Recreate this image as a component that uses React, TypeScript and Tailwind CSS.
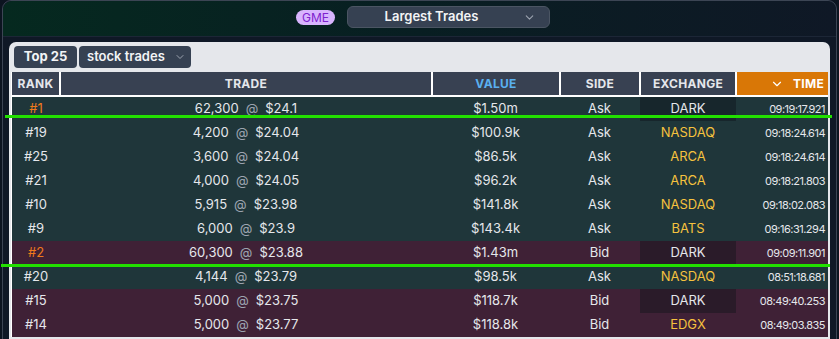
import { ChevronDown } from 'lucide-react'

type Trade = {
  rank: number
  size: string
  price: string
  value: string
  side: 'Ask' | 'Bid'
  exchange: string
  time: string
}

const TRADES: Trade[] = [
  { rank: 1, size: '62,300', price: '$24.1', value: '$1.50m', side: 'Ask', exchange: 'DARK', time: '09:19:17.921' },
  { rank: 19, size: '4,200', price: '$24.04', value: '$100.9k', side: 'Ask', exchange: 'NASDAQ', time: '09:18:24.614' },
  { rank: 25, size: '3,600', price: '$24.04', value: '$86.5k', side: 'Ask', exchange: 'ARCA', time: '09:18:24.614' },
  { rank: 21, size: '4,000', price: '$24.05', value: '$96.2k', side: 'Ask', exchange: 'ARCA', time: '09:18:21.803' },
  { rank: 10, size: '5,915', price: '$23.98', value: '$141.8k', side: 'Ask', exchange: 'NASDAQ', time: '09:18:02.083' },
  { rank: 9, size: '6,000', price: '$23.9', value: '$143.4k', side: 'Ask', exchange: 'BATS', time: '09:16:31.294' },
  { rank: 2, size: '60,300', price: '$23.88', value: '$1.43m', side: 'Bid', exchange: 'DARK', time: '09:09:11.901' },
  { rank: 20, size: '4,144', price: '$23.79', value: '$98.5k', side: 'Ask', exchange: 'NASDAQ', time: '08:51:18.681' },
  { rank: 15, size: '5,000', price: '$23.75', value: '$118.7k', side: 'Bid', exchange: 'DARK', time: '08:49:40.253' },
  { rank: 14, size: '5,000', price: '$23.77', value: '$118.8k', side: 'Bid', exchange: 'EDGX', time: '08:49:03.835' },
]

function TradeRow({ t }: { t: Trade }) {
  const bid = t.side === 'Bid'
  const dark = t.exchange === 'DARK'
  return (
    <div
      className={
        'grid h-6 grid-cols-[48px_372px_127px_81px_96px_1fr] items-center text-[13px] text-[#e5e7eb] ' +
        (bid ? 'bg-[#3f2136]' : 'bg-[#1f363a]')
      }
    >
      <span className={'text-center ' + (t.rank <= 3 ? 'text-[#f07a1c]' : '')}>#{t.rank}</span>
      <span className="text-center">
        {t.size}
        <span className="mx-[7px] text-[#9ca3af]">@</span>
        {t.price}
      </span>
      <span className="text-center">{t.value}</span>
      <span className="text-center">{t.side}</span>
      <span
        className={
          'flex h-full items-center justify-center ' +
          (dark
            ? bid
              ? 'bg-[#2a1b29] text-[#e5e7eb]'
              : 'bg-[#17262c] text-[#e5e7eb]'
            : 'text-[#f6c23e]')
        }
      >
        {t.exchange}
      </span>
      <span className="pr-[3px] text-right text-[11px] tracking-[-0.5px]">{t.time}</span>
    </div>
  )
}

export default function App() {
  return (
    <div className="relative h-[339px] w-[839px] overflow-hidden bg-[#0c1420] font-['Inter',sans-serif]">
      <div className="ml-[2px] mr-[2px] flex h-[360px] flex-col rounded-t-[9px] border border-[#3c4554] bg-[#0f1826]">
        {/* top bar */}
        <div className="flex h-[36px] items-center justify-center gap-3 rounded-t-[9px] border-b border-[#1c2636] bg-gradient-to-r from-[#05291f] via-[#081e22] to-[#0f1826] pb-[3px] pl-[7px]">
          <span className="rounded-full bg-[#d8b4fe] px-[6px] text-[12px] leading-[15px] text-[#7e22ce]">GME</span>
          <button className="relative flex h-[22px] w-[203px] items-center justify-center rounded-md border border-[#4b5563] bg-[#364152] pr-[34px] text-[13px] font-semibold text-[#f3f4f6]">
            Largest Trades
            <ChevronDown size={13} className="absolute right-[13px] text-[#9ca3af]" />
          </button>
        </div>

        {/* panel */}
        <div className="mx-[6px] mt-[5px] flex-1 rounded-t-[7px] bg-[#e5e7eb] px-[2px] pt-[4px]">
          <div className="ml-[3px] flex h-[22px] gap-[2px]">
            <button className="h-full w-[63px] rounded-[4px] bg-[#364152] text-[13px] font-bold text-[#f3f4f6]">Top 25</button>
            <button className="flex h-full w-[112px] items-center gap-[9px] rounded-[4px] bg-[#364152] pl-[8px] text-[13px] font-semibold text-[#f3f4f6]">
              stock trades
              <ChevronDown size={12} className="text-[#9ca3af]" />
            </button>
          </div>

          <div className="mt-[4px] border-l border-white bg-white">
            <div className="grid h-[24px] grid-cols-[47px_370px_126px_78px_94px_1fr] gap-[2px] border-b border-white text-[12px] font-bold tracking-[0.3px] text-[#e5e7eb]">
              <div className="flex items-center justify-center bg-[#384152]">RANK</div>
              <div className="flex items-center justify-center bg-[#384152]">TRADE</div>
              <div className="flex items-center justify-center bg-[#384152] text-[#5ab0f0]">VALUE</div>
              <div className="flex items-center justify-center bg-[#384152]">SIDE</div>
              <div className="flex items-center justify-center bg-[#384152]">EXCHANGE</div>
              <div className="flex items-center justify-end gap-[9px] bg-[#d97706] pr-[4px] text-white">
                <ChevronDown size={14} strokeWidth={2} />
                TIME
              </div>
            </div>
            <div className="mt-[1px]">
              {TRADES.map(t => (
                <TradeRow key={t.rank} t={t} />
              ))}
            </div>
          </div>
        </div>
      </div>

      {/* marker lines */}
      <div className="absolute left-[5px] top-[115px] h-[3px] w-[827px] bg-[#22e000]" />
      <div className="absolute left-[1px] top-[264px] h-[3px] w-[829px] bg-[#22e000]" />
    </div>
  )
}
